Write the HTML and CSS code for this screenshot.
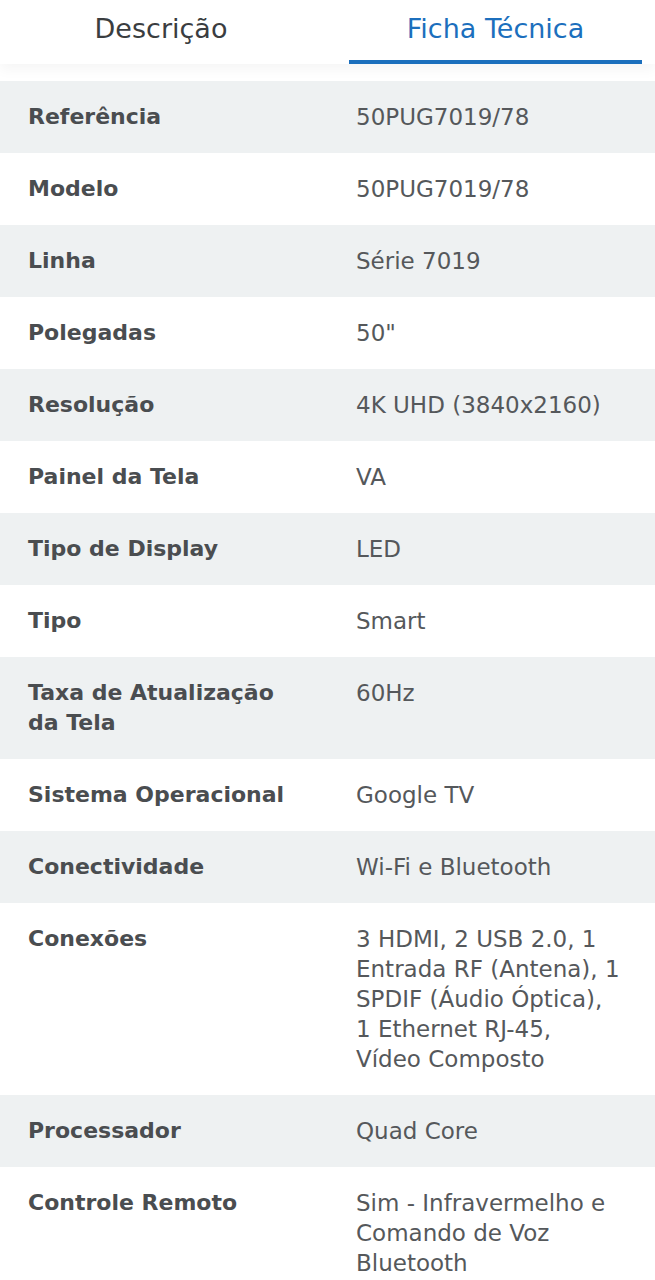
FILE: index.html
```html
<!DOCTYPE html>
<html lang="pt-BR">
<head>
  <meta charset="UTF-8">
  <meta name="viewport" content="width=device-width, initial-scale=1.0">
  <title>Ficha Técnica</title>
  <link rel="stylesheet" href="styles.css">
</head>
<body>
  <div class="tabs">
    <div class="tab">Descrição</div>
    <div class="tab active">Ficha Técnica</div>
  </div>

  <div class="specs">
    <div class="row"><div class="label">Referência</div><div class="value">50PUG7019/78</div></div>
    <div class="row"><div class="label">Modelo</div><div class="value">50PUG7019/78</div></div>
    <div class="row"><div class="label">Linha</div><div class="value">Série 7019</div></div>
    <div class="row"><div class="label">Polegadas</div><div class="value">50"</div></div>
    <div class="row"><div class="label">Resolução</div><div class="value">4K UHD (3840x2160)</div></div>
    <div class="row"><div class="label">Painel da Tela</div><div class="value">VA</div></div>
    <div class="row"><div class="label">Tipo de Display</div><div class="value">LED</div></div>
    <div class="row"><div class="label">Tipo</div><div class="value">Smart</div></div>
    <div class="row"><div class="label">Taxa de Atualização da Tela</div><div class="value">60Hz</div></div>
    <div class="row"><div class="label">Sistema Operacional</div><div class="value">Google TV</div></div>
    <div class="row"><div class="label">Conectividade</div><div class="value">Wi-Fi e Bluetooth</div></div>
    <div class="row"><div class="label">Conexões</div><div class="value">3 HDMI, 2 USB 2.0, 1 Entrada RF (Antena), 1 SPDIF (Áudio Óptica), 1 Ethernet RJ-45, Vídeo Composto</div></div>
    <div class="row"><div class="label">Processador</div><div class="value">Quad Core</div></div>
    <div class="row"><div class="label">Controle Remoto</div><div class="value">Sim - Infravermelho e Comando de Voz Bluetooth</div></div>
  </div>
</body>
</html>
```

FILE: styles.css
```css
body {
  margin: 0;
  background: #fff;
  font-family: 'DejaVu Sans', sans-serif;
  color: #505355;
}
.tabs {
  display: flex;
  height: 64px;
  box-shadow: 0 6px 12px rgba(0, 0, 0, 0.04);
  position: relative;
}
.tab {
  width: 322px;
  text-align: center;
  font-size: 27px;
  line-height: 58px;
  color: #3a3d40;
  border-bottom: 4px solid transparent;
}
.tab.active {
  width: 293px;
  margin-left: 27px;
  color: #1c6fbd;
  border-bottom-color: #1c6fbd;
}
.specs {
  padding-top: 17px;
}
.row {
  display: flex;
  padding: 21px 28px;
  line-height: 30px;
}
.row:nth-child(odd) {
  background: #eef1f2;
}
.label {
  width: 328px;
  padding-right: 50px;
  box-sizing: border-box;
  font-weight: bold;
  font-size: 22px;
  color: #4a4d50;
}
.value {
  width: 266px;
  font-size: 23px;
  color: #55585b;
}
```
